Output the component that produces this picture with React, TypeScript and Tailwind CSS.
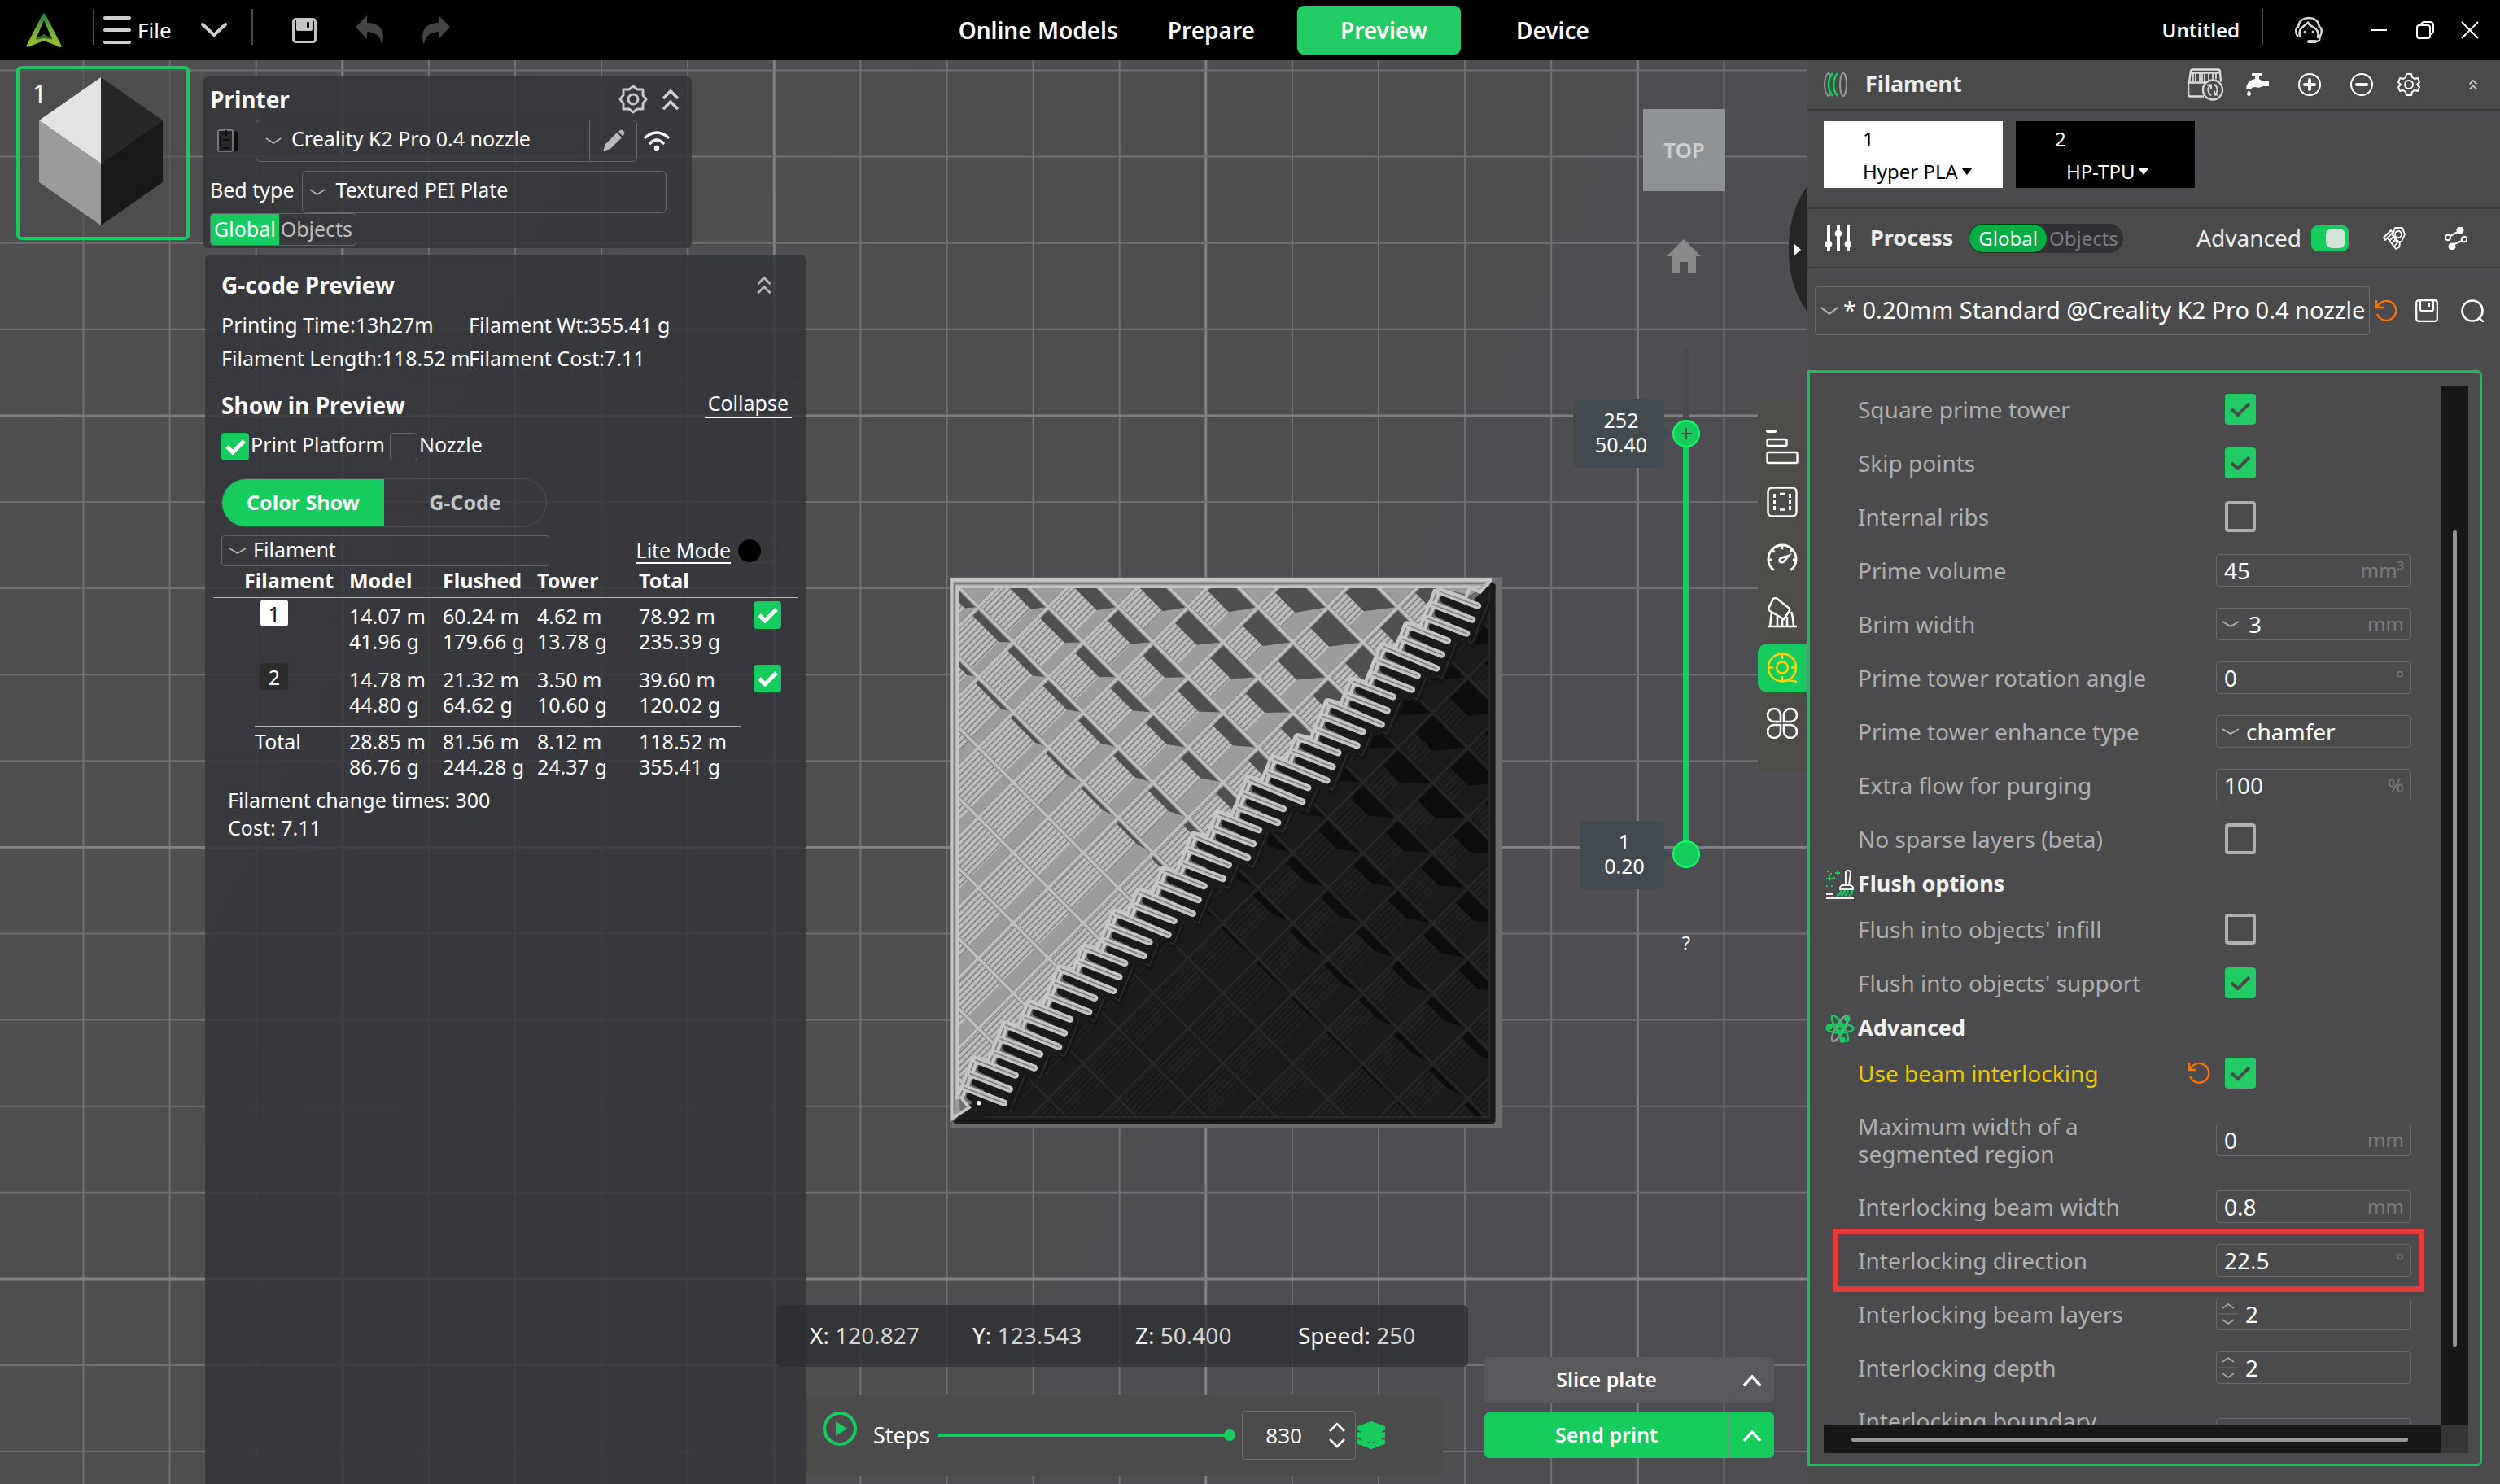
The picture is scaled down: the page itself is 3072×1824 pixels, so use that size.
import { ReactNode } from "react"

type IconProps = { className?: string }

const App = () => {
    return (
        <div className="flex flex-col h-screen min-h-[1824px] bg-[#4e4d51] text-white text-[24px] font-['Noto_Sans',sans-serif] select-none overflow-hidden">
            <TitleBar />
            <div className="flex flex-1 min-h-0">
                <Viewport />
                <SidePanel />
            </div>
        </div>
    )
}

export default App

/* ---------- title bar ---------- */

const TitleBar = () => {
    return (
        <header className="flex items-center h-[74px] shrink-0 bg-black">
            <div className="flex items-center w-[37%] shrink-0">
                <Logo className="w-11 h-[42px] ml-8" />
                <div className="w-[2px] h-11 bg-[#4a4a4a] ml-[38px] -mt-2" />
                <button className="flex items-center ml-[11px] text-[26px]">
                    <svg viewBox="0 0 34 36" className="w-[34px] h-9" stroke="#cfcfcf" strokeWidth="4" strokeLinecap="round">
                        <path d="M2 3H32M2 18H32M2 33H32" />
                    </svg>
                    <span className="ml-2">File</span>
                    <svg viewBox="0 0 32 18" className="w-8 h-[18px] ml-9" fill="none" stroke="#cfcfcf" strokeWidth="4" strokeLinecap="round" strokeLinejoin="round">
                        <path d="M2 2L16 15L30 2" />
                    </svg>
                </button>
                <div className="w-[2px] h-11 bg-[#4a4a4a] ml-[30px] -mt-2" />
                <button aria-label="Save" className="ml-12">
                    <svg viewBox="0 0 30 31" className="w-[30px] h-[31px]">
                        <rect x="1.5" y="1.5" width="27" height="28" rx="3" fill="none" stroke="#c4c4c4" strokeWidth="3" />
                        <path d="M5 2H25V14a2 2 0 0 1-2 2H7a2 2 0 0 1-2-2Z" fill="#c4c4c4" />
                        <rect x="18" y="5" width="3" height="7" rx="1" fill="#000" />
                    </svg>
                </button>
                <button aria-label="Undo" className="ml-12">
                    <CurvedArrow className="w-[34px] h-9" />
                </button>
                <button aria-label="Redo" className="ml-12">
                    <CurvedArrow className="w-[34px] h-9 -scale-x-100" />
                </button>
            </div>

            <nav className="flex items-center ml-3 text-[28px] leading-[38px] font-semibold">
                <a href="#models" className="pl-[29px] pr-8">Online Models</a>
                <a href="#prepare" className="pl-[29px] pr-8">Prepare</a>
                <a href="#preview" className="flex items-center justify-center w-[201px] h-[60px] pl-3 mx-5 rounded-lg bg-[#22cb63]">Preview</a>
                <a href="#device" className="px-12">Device</a>
            </nav>

            <div className="flex items-center justify-end flex-1 pr-[26px]">
                <span className="text-[24px] font-semibold">Untitled</span>
                <div className="w-px h-11 bg-[#4a4a4a] ml-7 -mt-2" />
                <button aria-label="Support" className="ml-[38px]">
                    <svg viewBox="0 0 36 34" className="w-9 h-[34px]" fill="none" stroke="#d6d6d6" strokeWidth="2.6" strokeLinecap="round">
                        <path d="M4 24C1 20 2 14 5 13C6 5 12 2 18 2S30 5 31 13C34 14 35 20 32 24L31 29Q30 31 26 31" />
                        <path d="M7 25C5 16 9 14 17 8C20 13 25 13 28 17C30 20 30 22 29 26" />
                        <path d="M18 31H26" strokeWidth="4" />
                        <path d="M13 19V20M23 19V20" />
                    </svg>
                </button>
                <button aria-label="Minimize" className="ml-[57px]">
                    <svg viewBox="0 0 22 22" className="w-[22px] h-[22px]" stroke="#fff" strokeWidth="2"><path d="M1 11H21" /></svg>
                </button>
                <button aria-label="Restore" className="ml-[35px]">
                    <svg viewBox="0 0 22 22" className="w-[22px] h-[22px]" fill="none" stroke="#fff" strokeWidth="2">
                        <rect x="1" y="5" width="16" height="16" rx="3" />
                        <path d="M6 4Q7 1 10 1H17Q21 1 21 5V12Q21 15 18 16" />
                    </svg>
                </button>
                <button aria-label="Close" className="ml-[33px]">
                    <svg viewBox="0 0 22 22" className="w-[22px] h-[22px]" stroke="#fff" strokeWidth="2"><path d="M1 1L21 21M21 1L1 21" /></svg>
                </button>
            </div>
        </header>
    )
}

/* ---------- 3D viewport ---------- */

const tools = [
    { name: 'Layer height', icon: <BarsIcon /> },
    { name: 'Line type', icon: <PlateIcon /> },
    { name: 'Speed', icon: <GaugeIcon /> },
    { name: 'Supports', icon: <SupportIcon /> },
    { name: 'Filament', icon: <SpoolIcon />, active: true },
    { name: 'More', icon: <CloverIcon /> },
]

const Viewport = () => {
    return (
        <main className="relative flex flex-1 min-w-0 overflow-hidden">
            <Scene />

            <div className="relative flex flex-1 min-w-0 pl-5">
                <button className="relative mt-[7px] w-[213px] h-[214px] shrink-0 border-4 border-[#17cc5f] rounded-md bg-[#4c4c4d]/60" aria-label="Plate 1">
                    <span className="absolute left-4 top-3 text-[30px] leading-[36px]">1</span>
                    <svg viewBox="0 0 152 182" className="absolute left-6 top-2.5 w-[152px] h-[182px]">
                        <path d="M76 0L0 53L76 106Z" fill="#e3e3e3" />
                        <path d="M76 0L152 53L76 106Z" fill="#272727" />
                        <path d="M0 53L76 106V182L0 129Z" fill="#9b9b9b" />
                        <path d="M152 53L76 106V182L152 129Z" fill="#191919" />
                    </svg>
                </button>

                <div className="flex flex-col w-[740px] shrink-0 ml-[17px]">
                    <PrinterPanel />
                    <GcodePanel />
                </div>

                <div className="flex flex-col justify-end flex-1 min-w-0 pb-2.5 z-10">
                    <div className="flex items-center -ml-9 h-[76px] w-[850px] pl-[41px] pb-0.5 rounded-md bg-[#2b2c2f]/75 text-[#d5d5d5] text-[28px]">
                        <p className="w-[200px]"><span className="text-white">X:</span> 120.827</p>
                        <p className="w-[200px]"><span className="text-white">Y:</span> 123.543</p>
                        <p className="w-[200px]"><span className="text-white">Z:</span> 50.400</p>
                        <p><span className="text-white">Speed:</span> 250</p>
                    </div>
                    <div className="flex items-center w-[783px] h-[100px] mt-[34px] pl-[21px] rounded-lg bg-[#4b4b4c] text-[27px]">
                        <button aria-label="Play" className="-mt-4">
                            <svg viewBox="0 0 42 42" className="w-[42px] h-[42px]">
                                <circle cx="21" cy="21" r="19" fill="none" stroke="#17cc5f" strokeWidth="4" />
                                <path d="M16 12V30L30 21Z" fill="#17cc5f" />
                            </svg>
                        </button>
                        <label htmlFor="steps" className="ml-5 mr-2.5">Steps</label>
                        <input
                            id="steps"
                            type="range"
                            defaultValue={100}
                            className="appearance-none w-[366px] h-[14px] bg-[linear-gradient(#17cc5f,#17cc5f)] bg-[length:100%_4px] bg-center bg-no-repeat [&::-webkit-slider-thumb]:appearance-none [&::-webkit-slider-thumb]:w-3.5 [&::-webkit-slider-thumb]:h-3.5 [&::-webkit-slider-thumb]:rounded-full [&::-webkit-slider-thumb]:bg-[#17cc5f]"
                        />
                        <div className="flex items-center w-[140px] h-[60px] ml-2 pl-7 rounded border border-[#6d6d70]">
                            <input aria-label="Step number" defaultValue="830" className="w-[78px] text-[26px] bg-transparent outline-none" />
                            <svg viewBox="0 0 20 32" className="w-5 h-8" fill="none" stroke="#fff" strokeWidth="2.6">
                                <path d="M1 11L10 2L19 11M1 21L10 30L19 21" />
                            </svg>
                        </div>
                        <svg viewBox="0 0 34 34" className="w-[34px] h-[34px] ml-[2px]" fill="#17cc5f" stroke="#17cc5f" strokeWidth="2" strokeLinejoin="round">
                            <path d="M17 1L33 7V10L17 16L1 10V7Z" />
                            <path d="M1 14L17 19L33 14V19L17 25L1 19Z" />
                            <path d="M1 23L17 28L33 23V27L17 33L1 27Z" />
                            <path d="M4 10H30V25H4Z" stroke="none" />
                        </svg>
                    </div>
                </div>
            </div>

            <div className="relative flex flex-col items-end justify-between w-[396px] shrink-0 pb-8 z-10">
                <div className="flex flex-col w-full">
                    <div className="flex items-center justify-center self-end w-[101px] h-[101px] mt-[60px] mr-[100px] bg-[#8f9397] text-[#cfd1d3] text-[26px] font-semibold">TOP</div>
                    <svg viewBox="0 0 42 41" className="self-end w-[42px] h-[41px] mt-[59px] mr-[130px]" fill="#8b8b8d">
                        <path d="M21 0L42 21H36V41H26V28H16V41H6V21H0Z" />
                    </svg>
                    <div className="flex items-start justify-end mt-[93px]">
                        <div className="flex flex-col items-end pt-[63px]">
                            <LayerTag layer="252" height="50.40" className="w-28" />
                            <div className="h-[434px]" />
                            <LayerTag layer="1" height="0.20" className="w-[104px]" />
                        </div>
                        <div className="flex flex-col items-center w-[34px] ml-2.5">
                            <div className="w-2 h-[88px] rounded-t bg-[#4a4a4b]" />
                            <div className="relative w-[34px] h-[551px]">
                                <VerticalRange name="Top layer" value={252} className="bg-[linear-gradient(#17cc5f,#17cc5f)]" />
                                <VerticalRange name="Bottom layer" value={1} className="" />
                                <svg viewBox="0 0 34 34" className="absolute inset-x-0 top-0 w-[34px] h-[34px] pointer-events-none" stroke="#33563f" strokeWidth="2">
                                    <path d="M10 17H24M17 10V24" />
                                </svg>
                            </div>
                            <button className="mt-[74px] text-[24px] leading-[36px]">?</button>
                        </div>
                        <div className="flex flex-col gap-2 w-[60px] ml-[71px] mt-[63px] py-7 bg-[#4c4c49]">
                            {
                                tools.map((tool) => (
                                    <button
                                        key={tool.name}
                                        aria-label={tool.name}
                                        className={`flex items-center justify-center w-[60px] h-[60px] rounded-l-xl ${tool.active ? 'bg-[#17cc5f] text-[#ffd400]' : 'text-white'}`}
                                    >
                                        {tool.icon}
                                    </button>
                                ))
                            }
                        </div>
                    </div>
                </div>

                <svg viewBox="0 0 24 152" className="absolute right-0 top-[156px] w-6 h-[152px]">
                    <path d="M24 0Q2 30 2 76T24 152Z" fill="#262626" />
                    <path d="M9 70L17 77L9 84Z" fill="#fff" />
                </svg>

                <div className="flex flex-col gap-3 w-[356px] mr-10">
                    <ActionButton label="Slice plate" className="bg-[#59585d]" />
                    <ActionButton label="Send print" className="bg-[#17cc5f]" />
                </div>
            </div>
        </main>
    )
}

const LayerTag = ({ layer, height, className }: { layer: string, height: string, className: string }) => (
    <div className={`relative flex flex-col items-center justify-center h-[84px] pl-1.5 pb-1 rounded-md bg-[#414a51] text-[25px] leading-[30px] ${className}`}>
        <span>{layer}</span>
        <span>{height}</span>
        <svg viewBox="0 0 10 14" className="absolute -right-2.5 top-[35px] w-2.5 h-3.5" fill="#414a51"><path d="M0 0L10 7L0 14Z" /></svg>
    </div>
)

const VerticalRange = ({ name, value, className }: { name: string, value: number, className: string }) => (
    <input
        type="range"
        aria-label={name}
        min={1}
        max={252}
        defaultValue={value}
        className={`absolute inset-0 appearance-none w-[34px] h-[551px] bg-[length:8px_94%] bg-center bg-no-repeat [writing-mode:vertical-lr] [direction:rtl] pointer-events-none [&::-webkit-slider-thumb]:pointer-events-auto [&::-webkit-slider-thumb]:appearance-none [&::-webkit-slider-thumb]:w-[34px] [&::-webkit-slider-thumb]:h-[34px] [&::-webkit-slider-thumb]:rounded-full [&::-webkit-slider-thumb]:border-2 [&::-webkit-slider-thumb]:border-[#0cff67] [&::-webkit-slider-thumb]:bg-[#17cc5f] ${className}`}
    />
)

const ActionButton = ({ label, className }: { label: string, className: string }) => (
    <div className={`flex h-14 rounded-md text-[25px] font-semibold ${className}`}>
        <button className="flex-1">{label}</button>
        <button aria-label={`${label} options`} className="flex items-center justify-center w-14 border-l border-white">
            <svg viewBox="0 0 22 15" className="w-[22px] h-[15px]" fill="none" stroke="#fff" strokeWidth="3.4"><path d="M1 14L11 3L21 14" /></svg>
        </button>
    </div>
)

const PrinterPanel = () => {
    return (
        <section className="w-[600px] h-[211px] shrink-0 mt-5 pt-2 pl-2 rounded-md bg-[#34353a]/85 text-[25px]">
            <div className="flex items-center justify-between h-10 pr-4">
                <h2 className="text-[28px] font-bold">Printer</h2>
                <div className="flex items-center gap-[18px]">
                    <button aria-label="Printer settings">
                        <svg viewBox="0 0 36 36" className="w-9 h-9" fill="none" stroke="#c9c9ca" strokeWidth="3" strokeLinejoin="round">
                            <path d="M18 2L23 6H30V13L34 18L30 23V30H23L18 34L13 30H6V23L2 18L6 13V6H13Z" />
                            <circle cx="18" cy="18" r="6" />
                        </svg>
                    </button>
                    <button aria-label="Collapse printer"><DoubleUp className="w-5 h-7 text-[#d0d0d0]" /></button>
                </div>
            </div>
            <div className="flex items-center mt-[5px]">
                <svg viewBox="0 0 28 30" className="w-7 h-[30px] ml-2">
                    <path d="M19 3L26 4V27L19 29Z" fill="#111" />
                    <rect x="2" y="2" width="18" height="26" rx="1" fill="#26272a" stroke="#8f8f92" strokeWidth="1.5" />
                    <path d="M5 6H16M5 9V22M12 2V9M8 14H17M8 24H16" stroke="#0c0c0d" strokeWidth="2" />
                </svg>
                <div className="flex items-center w-[469px] h-[52px] ml-5 pl-[11px] rounded-md border border-[#66676b]">
                    <ThinDown className="w-5 h-2" />
                    <select aria-label="Printer" className="flex-1 ml-3 pb-1 appearance-none bg-transparent outline-none">
                        <option>Creality K2 Pro 0.4 nozzle</option>
                    </select>
                    <button aria-label="Edit printer" className="flex items-center justify-center w-[58px] h-full border-l border-[#66676b]">
                        <svg viewBox="0 0 28 28" className="w-7 h-7" fill="#b9b9ba">
                            <path d="M1 27L4 18L18 4L24 10L10 24ZM20 3L22 1Q24 0 25 1L27 3Q28 4 27 6L25 8Z" />
                        </svg>
                    </button>
                </div>
                <svg viewBox="0 0 32 24" className="w-8 h-6 ml-2" fill="none" stroke="#fff" strokeWidth="3.4" strokeLinecap="round">
                    <path d="M2 8Q16 -4 30 8M8 15Q16 7 24 15" />
                    <circle cx="16" cy="21" r="1.6" fill="#fff" />
                </svg>
            </div>
            <div className="flex items-center mt-[11px]">
                <label htmlFor="bed" className="pb-1">Bed type</label>
                <div className="flex items-center w-[448px] h-[52px] ml-2.5 pl-2 rounded-md border border-[#66676b]">
                    <ThinDown className="w-5 h-2" />
                    <select id="bed" className="flex-1 ml-3 pb-1 appearance-none bg-transparent outline-none">
                        <option>Textured PEI Plate</option>
                    </select>
                </div>
            </div>
            <div className="inline-flex h-10 rounded border border-[#66676b] leading-[36px]">
                <button className="px-1 pb-1 rounded-l bg-[#17cc5f]">Global</button>
                <button className="pl-0.5 pr-1 pb-1 text-[#bdbdbf]">Objects</button>
            </div>
        </section>
    )
}

const usage = [
    { id: '1', swatch: 'bg-white text-black', model: ['14.07 m', '41.96 g'], flushed: ['60.24 m', '179.66 g'], tower: ['4.62 m', '13.78 g'], total: ['78.92 m', '235.39 g'] },
    { id: '2', swatch: 'bg-[#2c2c2c] text-white', model: ['14.78 m', '44.80 g'], flushed: ['21.32 m', '64.62 g'], tower: ['3.50 m', '10.60 g'], total: ['39.60 m', '120.02 g'] },
]

const GcodePanel = () => {
    return (
        <section className="flex-1 mt-2 ml-[2px] px-2.5 pt-[17px] rounded-t-md bg-[#34353a]/85 text-[25px]">
            <div className="flex justify-between pl-2.5 pr-8 h-10">
                <h2 className="text-[28px] leading-[40px] font-bold">G-code Preview</h2>
                <button aria-label="Collapse preview"><DoubleUp className="w-[18px] h-6 text-[#b5b5b6]" /></button>
            </div>
            <div className="grid grid-cols-[304px_1fr] pl-2.5 mt-[9px] leading-[41px] whitespace-nowrap">
                <p>Printing Time:13h27m</p>
                <p>Filament Wt:355.41 g</p>
                <p>Filament Length:118.52 m</p>
                <p>Filament Cost:7.11</p>
            </div>
            <div className="h-px mt-2 bg-[#b5b5b6]" />

            <div className="flex items-start justify-between pl-2.5 pr-[7px] mt-2 h-10">
                <h2 className="text-[28px] leading-[40px] font-bold">Show in Preview</h2>
                <button className="px-1 leading-[34px] border-b-2 border-white">Collapse</button>
            </div>
            <div className="flex items-center pl-2.5 mt-3.5 h-[34px]">
                <PreviewCheck id="platform" checked />
                <label htmlFor="platform" className="ml-0.5 mr-1.5 pb-1">Print Platform</label>
                <PreviewCheck id="nozzle" />
                <label htmlFor="nozzle" className="ml-0.5 pb-1">Nozzle</label>
            </div>
            <div className="flex ml-2.5 mt-[22px] w-[400px] h-[60px] rounded-full overflow-hidden border border-[#4c4d51] font-bold">
                <button className="w-1/2 bg-[#17cc5f]">Color Show</button>
                <button className="w-1/2 text-[#c2c6c9]">G-Code</button>
            </div>
            <div className="flex items-center justify-between ml-2.5 mr-4 mt-2.5 h-[38px]">
                <div className="flex items-center w-[403px] h-full pl-2 rounded border border-[#66676b]">
                    <ThinDown className="w-[22px] h-2" />
                    <select aria-label="Color by" className="flex-1 ml-2 pb-0.5 appearance-none bg-transparent outline-none">
                        <option>Filament</option>
                    </select>
                </div>
                <div className="flex items-center">
                    <label htmlFor="lite" className="leading-[30px] border-b-2 border-white">Lite Mode</label>
                    <input
                        id="lite"
                        type="checkbox"
                        className="appearance-none w-[58px] h-[30px] ml-2 rounded-full border border-[#3f4044] before:block before:w-7 before:h-7 before:rounded-full before:bg-black"
                    />
                </div>
            </div>

            <table className="w-full table-fixed text-left leading-[31px] whitespace-nowrap">
                <colgroup>
                    <col className="w-[167px]" />
                    <col className="w-[115px]" />
                    <col className="w-[116px]" />
                    <col className="w-[125px]" />
                    <col className="w-[137px]" />
                    <col />
                </colgroup>
                <thead>
                    <tr className="h-[38px] border-b border-[#b5b5b6]">
                        <th className="pl-[38px] pb-[3px] font-bold">Filament</th>
                        <th className="pb-[3px] font-bold">Model</th>
                        <th className="pb-[3px] font-bold">Flushed</th>
                        <th className="pb-[3px] font-bold">Tower</th>
                        <th className="pb-[3px] font-bold">Total</th>
                        <th aria-label="Visible" />
                    </tr>
                </thead>
                <tbody>
                    {
                        usage.map((row) => (
                            <tr key={row.id} className="align-top">
                                <td className="pl-[58px] pt-[2px]">
                                    <div className={`flex items-end justify-center w-[34px] h-[33px] rounded-sm ${row.swatch}`}>{row.id}</div>
                                </td>
                                <Amount value={row.model} />
                                <Amount value={row.flushed} />
                                <Amount value={row.tower} />
                                <Amount value={row.total} />
                                <td className="pl-1 pt-1"><PreviewCheck id={`show-${row.id}`} checked /></td>
                            </tr>
                        ))
                    }
                    <tr>
                        <td colSpan={5} className="pl-[51px] pt-px pb-[3px]"><div className="w-[597px] h-px bg-[#b5b5b6]" /></td>
                    </tr>
                    <tr className="align-top">
                        <td className="pl-[51px]">Total</td>
                        <td>28.85 m<br />86.76 g</td>
                        <td>81.56 m<br />244.28 g</td>
                        <td>8.12 m<br />24.37 g</td>
                        <td>118.52 m<br />355.41 g</td>
                    </tr>
                </tbody>
            </table>
            <div className="pl-[18px] mt-2 leading-[34px]">
                <p>Filament change times: 300</p>
                <p>Cost: 7.11</p>
            </div>
        </section>
    )
}

const Amount = ({ value }: { value: string[] }) => <td className="pt-[7px] pb-[9px]">{value[0]}<br />{value[1]}</td>

const PreviewCheck = ({ id, checked = false }: { id: string, checked?: boolean }) => (
    <span className="grid w-[34px] h-[34px] shrink-0">
        <input id={id} type="checkbox" aria-label={id} defaultChecked={checked} className="appearance-none [grid-area:1/1] rounded-sm border border-[#66676b] checked:border-[#17cc5f] checked:bg-[#17cc5f]" />
        {checked && (
            <svg viewBox="0 0 34 34" className="[grid-area:1/1] pointer-events-none" fill="none" stroke="#fff" strokeWidth="5">
                <path d="M7 17L14 24L28 10" />
            </svg>
        )}
    </span>
)

/* ---------- side panel ---------- */

const SidePanel = () => {
    return (
        <aside className="flex flex-col w-[852px] shrink-0 border-l border-[#2e3a36] bg-[#4b4b4d] text-[28px]">
            <div className="flex items-center h-[62px] shrink-0 pl-[19px] pr-7 border-b-2 border-[#3b3b3f] bg-[#4a4a4a] text-white">
                <svg viewBox="0 0 30 32" className="w-[30px] h-8" fill="none" strokeWidth="2">
                    <ellipse cx="25" cy="16" rx="4" ry="14" stroke="#9a9a9a" />
                    <path d="M6 2Q2 7 2 16T6 30M6 2Q8 2 9 4M6 30Q8 30 9 28" stroke="#9a9a9a" />
                    <path d="M12 2Q7 8 7 16T12 30M18 2Q13 8 13 16T18 30" stroke="#17cc5f" strokeWidth="2.6" />
                </svg>
                <h2 className="ml-[22px] pb-0.5 font-bold text-[#ececec] text-[27px]">Filament</h2>
                <div className="flex items-center ml-auto">
                    <button aria-label="Sync filament">
                        <svg viewBox="0 0 44 39" className="w-11 h-10" fill="none" stroke="#d9d9d9" strokeWidth="2.4">
                            <path d="M2 17L4 3Q4 1 7 1H37Q40 1 40 4L41 16M2 17H24M2 17Q1 17 1 20V31Q1 34 4 34H20M40 5H4" />
                            <path d="M7 5V16M10 5V16M15 5V16M18 5V16M21 5V16M26 5V15M31 5V13M35 5V13" strokeWidth="1.8" />
                            <circle cx="31" cy="26" r="12" fill="#4a4a4a" />
                            <path d="M29 33Q22 27 28 20M24 20H29V25M33 19Q40 25 34 32M38 32H33V27" strokeWidth="2" />
                        </svg>
                    </button>
                    <button aria-label="Flush volumes" className="ml-7">
                        <svg viewBox="0 0 28 28" className="w-7 h-7" fill="#fff">
                            <path d="M8 0H19Q20 0 20 2Q20 4 18 4H16V7L19 9H28V16H20Q16 19 11 17Q7 17 6 20H0Q0 9 11 7V4H9Q7 4 7 2Q7 0 8 0Z" />
                            <path d="M3.500 21Q7 25 5.500 27Q3.500 29 1.500 27Q0 25 3.500 21Z" />
                        </svg>
                    </button>
                    <button aria-label="Add filament" className="ml-9">
                        <svg viewBox="0 0 28 28" className="w-7 h-7" fill="none" stroke="#fff" strokeWidth="2" strokeLinecap="round">
                            <circle cx="14" cy="14" r="13" />
                            <path d="M8 14H20M14 8V20" strokeWidth="4" />
                        </svg>
                    </button>
                    <button aria-label="Remove filament" className="ml-9">
                        <svg viewBox="0 0 28 28" className="w-7 h-7" fill="none" stroke="#fff" strokeWidth="2" strokeLinecap="round">
                            <circle cx="14" cy="14" r="13" />
                            <path d="M8 14H20" strokeWidth="4" />
                        </svg>
                    </button>
                    <button aria-label="Filament settings" className="ml-[30px]">
                        <svg viewBox="0 0 28 28" className="w-7 h-7" fill="none" stroke="#fff" strokeWidth="2" strokeLinejoin="round">
                            <path d="M11 1H17L18 5L21 7L25 6L27 11L24 14L27 17L25 22L21 21L18 23L17 27H11L10 23L7 21L3 22L1 17L4 14L1 11L3 6L7 7L10 5Z" />
                            <circle cx="14" cy="14" r="5" />
                        </svg>
                    </button>
                    <button aria-label="Collapse filament" className="ml-[60px]"><DoubleUp className="w-2.5 h-3.5 text-[#d6d6d6]" /></button>
                </div>
            </div>

            <div className="flex gap-4 shrink-0 h-[121px] pl-5 pt-[13px] border-b-2 border-[#3b3b3f] text-[24px]">
                <FilamentChip slot="1" name="Hyper PLA" className="bg-white text-black pl-12" />
                <FilamentChip slot="2" name="HP-TPU" className="bg-black text-white pl-12" nameClass="pl-3.5" />
            </div>

            <div className="flex items-center shrink-0 h-[73px] pl-[22px] pr-10 border-b-2 border-[#3b3b3f] bg-[#4a4a4a] text-[#ececec]">
                <svg viewBox="0 0 32 32" className="w-8 h-8" stroke="#fff" strokeWidth="4" fill="#fff">
                    <path d="M4 0V32M16 0V32M28 0V32" />
                    <circle cx="4" cy="23" r="2.400" />
                    <circle cx="16" cy="10" r="2.400" />
                    <circle cx="28" cy="23" r="2.400" />
                </svg>
                <h2 className="ml-[23px] font-bold text-[27px]">Process</h2>
                <div className="flex ml-[19px] h-9 rounded-full bg-[#303035] text-[24px] leading-[34px]">
                    <button className="px-[11px] rounded-full border border-[#1c3324] bg-[#02ae41] text-white">Global</button>
                    <button className="pl-0.5 pr-1.5 text-[#7c7c82]">Objects</button>
                </div>
                <label htmlFor="advanced" className="ml-auto pb-0.5">Advanced</label>
                <input
                    id="advanced"
                    type="checkbox"
                    defaultChecked
                    className="appearance-none w-[46px] h-8 ml-3 p-1 rounded-lg bg-[#17cc5f] before:block before:w-6 before:h-6 before:ml-[14px] before:rounded-lg before:bg-[#d2e3d8]"
                />
                <button aria-label="Compare presets" className="ml-[42px]">
                    <svg viewBox="0 0 28 28" className="w-7 h-7" fill="none" stroke="#fff" strokeWidth="1.800" strokeLinejoin="round">
                        <path d="M15 1H24L27 9L23 18H17L12 10Z" />
                        <circle cx="19" cy="9" r="4" />
                        <path d="M10 4L12 7L3 16L1 13ZM6 14L16 27L20 25L21 20L12 9M8 17L13 12M11 20L16 15M14 24L19 18" />
                    </svg>
                </button>
                <button aria-label="Object list" className="ml-12">
                    <svg viewBox="0 0 28 28" className="w-7 h-7" fill="none" stroke="#fff" strokeWidth="2">
                        <path d="M7 11L18 5M10 22L21 17" />
                        <circle cx="4" cy="13" r="3.200" />
                        <circle cx="24" cy="15" r="3.200" />
                        <circle cx="19" cy="4" r="3.500" fill="#fff" />
                        <circle cx="9" cy="24" r="3.500" fill="#fff" />
                    </svg>
                </button>
            </div>

            <div className="flex items-center shrink-0 h-[125px] pl-[9px] pr-5 pb-[22px] text-white text-[29px]">
                <div className="flex items-center flex-1 min-w-0 h-[60px] pl-1.5 rounded border border-[#6b6b6e]">
                    <ThinDown className="w-[22px] h-2.5" />
                    <select aria-label="Process preset" className="flex-1 min-w-0 ml-1.5 pb-0.5 appearance-none bg-transparent outline-none">
                        <option>* 0.20mm Standard @Creality K2 Pro 0.4 nozzle</option>
                    </select>
                </div>
                <button aria-label="Reset preset" className="ml-1.5"><ResetIcon /></button>
                <button aria-label="Save preset" className="ml-[22px]">
                    <svg viewBox="0 0 28 28" className="w-7 h-7" fill="none" stroke="#fff" strokeWidth="2.200">
                        <rect x="1.200" y="1.200" width="25.600" height="25.600" rx="3" />
                        <path d="M6 2V12Q6 14 8 14H20Q22 14 22 12V2M17 5V9" />
                    </svg>
                </button>
                <button aria-label="Search settings" className="ml-7">
                    <svg viewBox="0 0 28 28" className="w-7 h-7" fill="none" stroke="#fff" strokeWidth="2.600" strokeLinecap="round">
                        <circle cx="14" cy="14" r="12.500" />
                        <path d="M22 23L27 27" />
                    </svg>
                </button>
            </div>

            <SettingsList />
        </aside>
    )
}

const FilamentChip = ({ slot, name, className, nameClass = '' }: { slot: string, name: string, className: string, nameClass?: string }) => (
    <button className={`flex flex-col items-start w-[220px] h-[82px] pt-0.5 leading-[40px] ${className}`}>
        <span>{slot}</span>
        <span className={`flex items-center ${nameClass}`}>
            {name}
            <svg viewBox="0 0 14 9" className="w-3.5 h-2 ml-1" fill="currentColor"><path d="M0 0H14L7 9Z" /></svg>
        </span>
    </button>
)

const SettingsList = () => {
    return (
        <div className="flex flex-1 min-h-0 mr-[22px] mb-[22px] pl-[17px] pr-3.5 pb-[13px] pt-[17px] rounded-r-md border-[3px] border-[#17bf5c]">
            <div className="flex flex-col flex-1 min-w-0">
                <div className="flex-1 min-h-0 overflow-hidden -mt-[5px]">
                    <CheckRow id="square" label="Square prime tower" checked />
                    <CheckRow id="skip" label="Skip points" checked />
                    <CheckRow id="ribs" label="Internal ribs" />
                    <FieldRow id="volume" label="Prime volume" value="45" unit="mm³" />
                    <FieldRow id="brim" label="Brim width" value="3" unit="mm" kind="drop" />
                    <FieldRow id="rotation" label="Prime tower rotation angle" value="0" unit="°" />
                    <FieldRow id="enhance" label="Prime tower enhance type" value="chamfer" kind="select" />
                    <FieldRow id="flow" label="Extra flow for purging" value="100" unit="%" />
                    <CheckRow id="sparse" label="No sparse layers (beta)" />

                    <GroupTitle title="Flush options" icon={<BrushIcon />} />
                    <CheckRow id="infill" label="Flush into objects' infill" />
                    <CheckRow id="support" label="Flush into objects' support" checked />

                    <GroupTitle title="Advanced" icon={<AtomIcon />} />
                    <CheckRow id="beam" label="Use beam interlocking" checked changed />
                    <FieldRow id="segmented" label="Maximum width of a segmented region" value="0" unit="mm" tall />
                    <FieldRow id="beamwidth" label="Interlocking beam width" value="0.8" unit="mm" />
                    <FieldRow id="direction" label="Interlocking direction" value="22.5" unit="°" marked />
                    <FieldRow id="layers" label="Interlocking beam layers" value="2" kind="spin" />
                    <FieldRow id="depth" label="Interlocking depth" value="2" kind="spin" />
                    <FieldRow id="boundary" label="Interlocking boundary avoidance" value="2" tall />
                </div>
                <div className="flex items-center shrink-0 h-[34px] bg-[#171717]">
                    <div className="flex-1 h-[5px] ml-[34px] mr-10 rounded-full bg-[#959595]" />
                </div>
            </div>
            <div className="flex flex-col w-[34px] shrink-0">
                <div className="flex-1 flex justify-center bg-[#171717]">
                    <div className="w-[5px] mt-[177px] mb-[97px] rounded-full bg-[#959595]" />
                </div>
                <div className="h-[34px] bg-[#363636]" />
            </div>
        </div>
    )
}

const GroupTitle = ({ title, icon }: { title: string, icon: ReactNode }) => (
    <div className="flex items-center h-[45px] pl-[2px]">
        {icon}
        <h3 className="ml-1 mr-1.5 text-[27px] font-bold text-[#f1f1f1]">{title}</h3>
        <div className="flex-1 h-px bg-[#76767a]" />
    </div>
)

const CheckRow = ({ id, label, checked = false, changed = false }: { id: string, label: string, checked?: boolean, changed?: boolean }) => (
    <div className="flex items-center h-[66px] pl-[42px]">
        <label htmlFor={id} className={`flex-1 ${changed ? 'text-[#f0c800]' : 'text-[#afafb1]'}`}>{label}</label>
        {changed && <button aria-label={`Reset ${label}`} className="mr-[18px]"><ResetIcon /></button>}
        <span className="grid w-[38px] h-[38px] mr-[227px]">
            <input id={id} type="checkbox" defaultChecked={checked} className="appearance-none [grid-area:1/1] rounded border-4 border-[#afafb1] checked:border-[#22cb63] checked:bg-[#22cb63]" />
            {checked && (
                <svg viewBox="0 0 38 38" className="[grid-area:1/1] pointer-events-none" fill="none" stroke="#4b4b4d" strokeWidth="4">
                    <path d="M8 19L16 26L30 12" />
                </svg>
            )}
        </span>
    </div>
)

type FieldProps = {
    id: string
    label: string
    value: string
    unit?: string
    kind?: 'text' | 'drop' | 'select' | 'spin'
    tall?: boolean
    marked?: boolean
}

const FieldRow = ({ id, label, value, unit, kind = 'text', tall = false, marked = false }: FieldProps) => (
    <div className={`relative flex items-center pl-[42px] ${tall ? 'h-[98px]' : 'h-[66px]'}`}>
        {marked && <div className="absolute left-[11px] right-5 -top-[6px] -bottom-[6px] border-[7px] border-[#e23b3b]" />}
        <label htmlFor={id} className={`leading-[34px] text-[#afafb1] ${tall ? 'w-[300px]' : ''}`}>{label}</label>
        <div className="flex items-center w-[240px] h-10 ml-auto mr-9 pr-2 rounded border border-[#69696c]">
            {(kind === 'drop' || kind === 'select') && <ThinDown className="w-[22px] h-2 ml-1.5 mr-0.5" />}
            {kind === 'spin' && (
                <svg viewBox="0 0 24 28" className="w-6 h-7 ml-[2px]" fill="none" stroke="#a5a5a7" strokeWidth="1.800">
                    <path d="M5 7L12 2L19 7M5 21L12 26L19 21" />
                    <path d="M0 14H24" stroke="#77777a" strokeWidth="1" />
                </svg>
            )}
            {kind === 'select'
                ? <select id={id} className="flex-1 min-w-0 ml-1.5 appearance-none bg-transparent outline-none"><option>{value}</option></select>
                : <input id={id} defaultValue={value} className="flex-1 w-full min-w-0 ml-[9px] bg-transparent outline-none" />}
            {unit && <span className="text-[24px] text-[#7b7b7e]">{unit}</span>}
        </div>
    </div>
)

/* ---------- icons ---------- */

const Logo = ({ className }: IconProps) => (
    <svg viewBox="0 0 44 42" className={className}>
        <defs>
            <linearGradient id="logo" x1="0" y1="0" x2="0" y2="1">
                <stop offset="0" stopColor="#1b7a3c" />
                <stop offset=".5" stopColor="#6fae35" />
                <stop offset="1" stopColor="#9dc22c" />
            </linearGradient>
        </defs>
        <path d="M22 0L24 2L44 41L42 42L22 34L2 42L0 41L20 2ZM22 9L12 32L22 26L32 32Z" fill="url(#logo)" fillRule="evenodd" />
        <path d="M12 33L22 26L32 33L22 31Z" fill="#2a6a33" />
    </svg>
)

const CurvedArrow = ({ className }: IconProps) => (
    <svg viewBox="0 0 34 36" className={className} fill="#454545">
        <path d="M0 14L14 0V9Q33 9 34 26Q34 31 32 36Q31 21 14 20V29Z" />
    </svg>
)

const ThinDown = ({ className }: IconProps) => (
    <svg viewBox="0 0 22 8" className={className} preserveAspectRatio="none" fill="none" stroke="#b5b5b8" strokeWidth="1.800"><path d="M1 1L11 7L21 1" /></svg>
)

const DoubleUp = ({ className }: IconProps) => (
    <svg viewBox="0 0 20 28" className={className} fill="none" stroke="currentColor" strokeWidth="3.400"><path d="M1 13L10 4L19 13M1 26L10 17L19 26" /></svg>
)

const ResetIcon = () => (
    <svg viewBox="0 0 28 28" className="w-7 h-7" fill="none" stroke="#ff7300" strokeWidth="2.400">
        <path d="M2 1V10H11M3 9Q8 1 16 2A12 12 0 1 1 3 18" />
    </svg>
)

function BarsIcon() {
    return (
        <svg viewBox="0 0 40 44" className="w-10 h-11" fill="none" stroke="currentColor" strokeWidth="2.400">
            <path d="M2 3H11" strokeWidth="4" strokeLinecap="round" />
            <rect x="1.500" y="13" width="24" height="8" rx="1.500" />
            <rect x="1.500" y="29" width="37" height="13" rx="1.500" />
        </svg>
    )
}

function PlateIcon() {
    return (
        <svg viewBox="0 0 38 38" className="w-[38px] h-[38px]" fill="none" stroke="currentColor" strokeWidth="2.400">
            <rect x="1.500" y="1.500" width="35" height="35" rx="5" />
            <path d="M9.500 9V29M28.500 9V29" strokeDasharray="5 2.500" strokeWidth="3" />
            <path d="M16 9H22M16 28.500H22" />
        </svg>
    )
}

function GaugeIcon() {
    return (
        <svg viewBox="0 0 38 34" className="w-[38px] h-[34px]" fill="none" stroke="currentColor" strokeWidth="2.800" strokeLinecap="round">
            <path d="M8 32Q2 28 2 19A17 17 0 0 1 36 19Q36 28 30 32" />
            <path d="M19 3V6M7 8L9 10M31 8L29 10M2 20H5M36 20H33" />
            <path d="M27 15L17 18Q14 21 17 23Q20 24 22 21Z" />
        </svg>
    )
}

function SupportIcon() {
    return (
        <svg viewBox="0 0 38 38" className="w-[38px] h-[38px]" fill="none" stroke="currentColor" strokeWidth="2.600" strokeLinejoin="round">
            <path d="M1 36H37" />
            <path d="M8 2Q10 0 13 2L28 14Q29 16 27 18L21 27L4 17Q1 15 3 12Z" />
            <path d="M6 19L4 36M13 23V36M19 27V36M25 24V36M30 18Q32 22 33 36" />
        </svg>
    )
}

function SpoolIcon() {
    return (
        <svg viewBox="0 0 38 38" className="w-[38px] h-[38px]" fill="none" stroke="currentColor" strokeWidth="2.400">
            <circle cx="19" cy="18.500" r="17" />
            <circle cx="19" cy="18.500" r="7" />
            <path d="M19 1V8M19 29V36M1 18.500H8M30 18.500H37M19 35.500Q27 33 37 36" />
        </svg>
    )
}

function CloverIcon() {
    return (
        <svg viewBox="0 0 38 38" className="w-[38px] h-[38px]" fill="none" stroke="currentColor" strokeWidth="2.600">
            <path d="M17 17V9A8 8 0 1 0 9 17ZM21 17V9A8 8 0 1 1 29 17ZM17 21V29A8 8 0 1 1 9 21ZM21 21V29A8 8 0 1 0 29 21Z" />
        </svg>
    )
}

const BrushIcon = () => (
    <svg viewBox="0 0 36 36" className="w-9 h-9" fill="none" stroke="#f1f1f1" strokeWidth="2">
        <path d="M25 19V4Q25 1 28 1T31 4L29 19M18 24Q17 20 22 19H30Q35 20 34 24ZM1 30H10M1 35H35" />
        <path d="M20 25Q19 30 14 32M24 25Q23 30 19 32M28 25Q27 30 24 32M33 25Q33 30 29 32" stroke="#17cc5f" strokeWidth="2.600" />
        <path d="M5 7V14M1 11H9M15 1V6M12 4H18M3 1V3M7 4V6M11 9V11M2 19V21M8 19V21" stroke="#17cc5f" />
    </svg>
)

const AtomIcon = () => (
    <svg viewBox="0 0 36 36" className="w-9 h-9" fill="none" strokeWidth="2.400">
        <ellipse cx="18" cy="18" rx="5" ry="18" transform="rotate(30 18 18)" stroke="#9a9a9a" />
        <ellipse cx="18" cy="18" rx="5" ry="18" transform="rotate(-30 18 18)" stroke="#17cc5f" />
        <ellipse cx="18" cy="18" rx="16.500" ry="5.500" stroke="#17cc5f" />
        <circle cx="18" cy="18" r="3" stroke="#17cc5f" />
        <circle cx="27" cy="6" r="2.500" fill="#17cc5f" stroke="#17cc5f" />
        <circle cx="5" cy="16" r="2.500" fill="#17cc5f" stroke="#17cc5f" />
        <circle cx="21" cy="32" r="2.500" fill="#17cc5f" stroke="#17cc5f" />
    </svg>
)

/* ---------- plate and sliced cube ---------- */

// beams step down along the seam, and jump sideways after these indexes
const BEAMS = 45
const TIP_BREAKS = [3, 6, 8, 11, 13, 16, 18, 20, 23, 25, 28, 30, 32, 35, 37, 40, 42]
const SLOT_BREAKS = [3, 5, 8, 10, 13, 15, 17, 20, 22, 25, 27, 29, 32, 34, 37, 39, 42]

const walk = (x: number, y: number, breaks: number[]) => {
    const points = []
    for (let i = 1; i <= BEAMS; i++) {
        points.push([x, y])
        const jump = breaks.includes(i)
        x += jump ? -49.2 : -14.7
        y += jump ? 19.5 : 37
    }
    return points
}

const tips = walk(1432, 119, TIP_BREAKS)
const slots = walk(1337, 98, SLOT_BREAKS)
const seam = slots.flatMap(([x, y]) => [`${x - 10},${y - 21}`, `${x - 21},${y + 9}`]).join(' ')
const darkSeam = tips.flatMap(([x, y]) => [`${x + 30},${y - 12}`, `${x + 14},${y + 26}`]).join(' ')

// diamonds of the infill lattice, by their centres
const cells: number[][] = []
for (let row = -1; row < 16; row++) {
    for (let col = -1; col < 9; col++) {
        cells.push([132 + col * 182 + (row % 2 ? 91 : 0), 216 + row * 94])
    }
}

const clamp = (n: number, min: number, max: number) => Math.min(max, Math.max(min, n))

// point inside a cell, u runs down-right and v runs down-left from its top node
const at = (cx: number, cy: number, u: number, v: number) => `${cx + (u - v) * 91},${cy - 94 + (u + v) * 94}`

const lattice = cells
    .map(([cx, cy]) => `M${at(cx, cy, 1, 0)}L${at(cx, cy, 0, 0)}L${at(cx, cy, 0, 1)}`)
    .join('')

const Infill = ({ hatch, wall, line, edge }: { hatch: string, wall: string, line: string, edge: string }) => (
    <g>
        {
            cells.map(([cx, cy]) => {
                const f = clamp((36 + (cx - 313) * 0.05 - (cy - 216) * 0.055) / 130, 0.04, 0.55)
                const g = clamp((20 + cx * 0.03 + cy * 0.015) / 130, 0.15, 0.45)
                return (
                    <g key={`${cx}-${cy}`}>
                        <polygon points={`${at(cx, cy, 0, f)} ${at(cx, cy, 1 - g, f)} ${at(cx, cy, 1 - g, 1)} ${at(cx, cy, 0, 1)}`} fill={hatch} />
                        <polygon points={`${at(cx, cy, 0, 0)} ${at(cx, cy, 1, 0)} ${at(cx, cy, 1 - g, f)} ${at(cx, cy, 0, f)}`} fill={wall} />
                    </g>
                )
            })
        }
        <path d={lattice} fill="none" stroke={edge} strokeWidth="13" />
        <path d={lattice} fill="none" stroke={line} strokeWidth="8" />
    </g>
)

const Scene = () => {
    const columns = Array.from({ length: 24 }, (_, i) => i - 1)
    const rows = Array.from({ length: 19 }, (_, i) => i - 1)
    return (
        <svg viewBox="0 0 2220 1750" preserveAspectRatio="xMidYMid slice" className="absolute inset-0 w-full h-full">
            <defs>
                <linearGradient id="floor" x1="0" y1="0" x2="1" y2="0.4">
                    <stop offset="0" stopColor="#505051" />
                    <stop offset="0.5" stopColor="#4e4d50" />
                    <stop offset="1" stopColor="#4e4d52" />
                </linearGradient>
                <pattern id="hatchLight" width="12" height="12" patternUnits="userSpaceOnUse" patternTransform="rotate(-46)">
                    <rect width="12" height="12" fill="#bebebe" />
                    <rect width="12" height="4" fill="#858585" />
                </pattern>
                <pattern id="hatchDark" width="12" height="12" patternUnits="userSpaceOnUse" patternTransform="rotate(-46)">
                    <rect width="12" height="12" fill="#202020" />
                    <rect width="12" height="4" fill="#171717" />
                </pattern>
                <clipPath id="lightHalf"><polygon points={`78,68 1325,68 ${seam} 78,1440`} /></clipPath>
                <clipPath id="darkHalf"><polygon points={`1460,100 ${darkSeam} 200,1488 1460,1488`} /></clipPath>
            </defs>
            <rect x="-500" y="-500" width="3300" height="2800" fill="url(#floor)" />
            {columns.map((i) => (
                <path key={`c${i}`} d={`M${102.5 + i * 106.1} -200V2000`} stroke={i % 5 === 3 ? '#818185' : '#717175'} strokeWidth={i % 5 === 3 ? 3 : 2} />
            ))}
            {rows.map((i) => (
                <path key={`r${i}`} d={`M-200 ${12.5 + i * 106.1}H2500`} stroke={i % 5 === 4 ? '#818185' : '#717175'} strokeWidth={i % 5 === 4 ? 3 : 2} />
            ))}

            <g transform="translate(1140 616) scale(0.472 0.4592)">
                <rect x="58" y="42" width="1438" height="1476" fill="#6c6c6f" />
                <path d="M66 1500L1468 55L1478 62V1500L1470 1507H72Z" fill="#1b1b1b" />
                <g clipPath="url(#darkHalf)">
                    <Infill hatch="url(#hatchDark)" wall="#0d0d0d" line="#252525" edge="#171717" />
                </g>
                <path d="M1462 80V1488H150" fill="none" stroke="#2a2a2a" strokeWidth="3" />
                <path d="M1471 66V1497H80" fill="none" stroke="#111" strokeWidth="3" />
                <polyline points={darkSeam} fill="none" stroke="#161616" strokeWidth="18" />
                <polyline points={darkSeam} fill="none" stroke="#2b2b2b" strokeWidth="4" />

                <polygon points={`58,47 1468,47 1462,66 1410,90 1330,70 ${seam} 84,1470 62,1497`} fill="#9c9c9c" />
                <g clipPath="url(#lightHalf)">
                    <Infill hatch="url(#hatchLight)" wall="#505050" line="#bfbfbf" edge="#8a8a8a" />
                </g>

                {slots.map(([x, y], i) => (
                    <path key={i} d={`M${x + 8} ${y + 3}L${tips[i][0] - 8} ${tips[i][1] + 19}`} stroke="#1a1a1a" strokeWidth="22" strokeLinecap="round" />
                ))}
                <polyline points={seam} fill="none" stroke="#c6c6c6" strokeWidth="22" strokeLinejoin="round" />
                <polyline points={seam} fill="none" stroke="#858585" strokeWidth="4" />
                {tips.map(([x, y], i) => (
                    <g key={i} strokeLinecap="round">
                        <path d={`M${slots[i][0] - 8} ${slots[i][1] - 20}L${x} ${y}`} stroke="#c6c6c6" strokeWidth="18" />
                        <path d={`M${slots[i][0] - 8} ${slots[i][1] - 20}L${x} ${y}`} stroke="#858585" strokeWidth="4" />
                    </g>
                ))}

                <path d="M1468 50H62V1492L108 1462L84 1432M1440 68H77V1440" fill="none" stroke="#c6c6c6" strokeWidth="8" />
                <path d="M1450 59H70V1470" fill="none" stroke="#7d7d7d" strokeWidth="4" />
                <path d="M1466 50L1438 82L1412 70L1400 98L1325 72" fill="none" stroke="#c6c6c6" strokeWidth="9" />
                <circle cx="133" cy="1450" r="6" fill="#eee" />
            </g>
        </svg>
    )
}
